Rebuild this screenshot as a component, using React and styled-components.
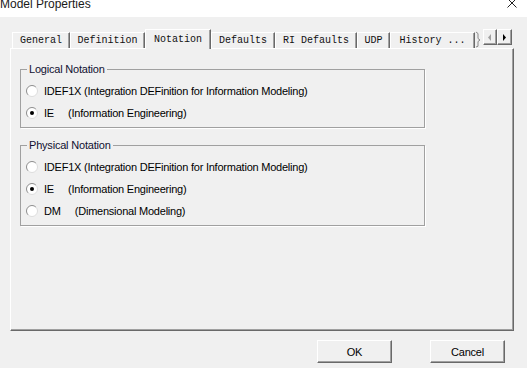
import React from 'react'
import styled, { createGlobalStyle } from 'styled-components'

const GlobalStyle = createGlobalStyle`
  html, body {
    margin: 0;
    padding: 0;
    background: #f0f0f0;
  }
  body {
    font-family: "Liberation Sans", Arial, sans-serif;
    font-size: 11px;
    color: #000;
  }
`

const Window = styled.div`
  width: 527px;
  height: 368px;
  overflow: hidden;
  background: #f0f0f0;
  display: flex;
  flex-direction: column;
`

const TitleBar = styled.div`
  height: 17px;
  flex-shrink: 0;
  background: #fff;
  display: flex;
  justify-content: space-between;
  align-items: flex-start;
  overflow: hidden;
`

const Title = styled.span`
  font-size: 12px;
  line-height: 12px;
  margin-top: -2px;
  color: #1a1a1a;
  white-space: nowrap;
`

const Close = styled.svg`
  margin: -2px 10px 0 0;
`

const Body = styled.div`
  padding: 12px 13px 0 10px;
`

const TabRow = styled.div`
  display: flex;
  align-items: flex-end;
  height: 19px;
  padding-left: 2px;
  padding-right: 2px;
`

const Tab = styled.div`
  box-sizing: border-box;
  width: ${p => p.$w}px;
  height: ${p => (p.$active ? 20 : 16)}px;
  margin-bottom: ${p => (p.$active ? -1 : 0)}px;
  position: relative;
  z-index: ${p => (p.$active ? 1 : 0)};
  background: #f0f0f0;
  border-top: 1px solid #fff;
  border-left: 1px solid #fff;
  border-right: 1px solid #696969;
  box-shadow: inset -1px 0 #a0a0a0;
  display: flex;
  align-items: ${p => (p.$active ? 'flex-start' : 'center')};
  justify-content: center;
  padding-top: ${p => (p.$active ? 4 : 1)}px;
  font-family: "Liberation Mono", "DejaVu Sans Mono", monospace;
  font-size: 10px;
  line-height: 12px;
  color: #111;
  white-space: pre;
`

const Brace = styled.svg`
  align-self: flex-end;
`

const Arrows = styled.div`
  margin-left: auto;
  align-self: flex-start;
  display: flex;
`

const ArrowButton = styled.div`
  box-sizing: border-box;
  width: ${p => p.$w}px;
  height: 16px;
  border-top: 1px solid #fff;
  border-left: 1px solid #fff;
  border-right: 1px solid #696969;
  border-bottom: 1px solid #696969;
  box-shadow: inset -1px -1px #a0a0a0;
  display: flex;
  align-items: center;
  justify-content: center;
`

const Panel = styled.div`
  box-sizing: border-box;
  height: 283px;
  border-top: 1px solid #fff;
  border-left: 1px solid #fff;
  border-right: 1px solid #696969;
  border-bottom: 1px solid #696969;
  box-shadow: inset -1px -1px #a0a0a0;
  padding: 14px 0 0 9px;
`

const Group = styled.fieldset`
  box-sizing: border-box;
  width: 405px;
  margin: ${p => (p.$first ? 0 : 11)}px 0 0 0;
  padding: 5px 0 3px 5px;
  border: 1px solid #a0a0a0;
  box-shadow: 1px 1px 0 #fff;
  min-width: 0;
`

const Legend = styled.legend`
  margin-left: 1px;
  padding: 0 2px;
  line-height: 12px;
  letter-spacing: -0.2px;
  color: #101030;
`

const Row = styled.label`
  display: flex;
  align-items: center;
  height: 22px;
  gap: 6px;
  white-space: pre;
  letter-spacing: -0.23px;
`

const ButtonBar = styled.div`
  display: flex;
  justify-content: flex-end;
  gap: 38px;
  padding: 9px 22px 0 0;
`

const Button = styled.div`
  box-sizing: border-box;
  width: 75px;
  height: 23px;
  background: #f0f0f0;
  border-top: 1px solid #fff;
  border-left: 1px solid #fff;
  border-right: 1px solid #696969;
  border-bottom: 1px solid #696969;
  box-shadow: inset -1px -1px #a0a0a0;
  display: flex;
  align-items: center;
  justify-content: center;
  letter-spacing: -0.2px;
`

function Radio({ checked }) {
  return (
    <svg width="12" height="12" viewBox="0 0 12 12">
      <circle cx="6" cy="6" r="5.5" fill="#fff" />
      <path d="M2.11 9.89 A5.5 5.5 0 0 1 9.89 2.11" fill="none" stroke="#8c8c8c" />
      <path d="M9.89 2.11 A5.5 5.5 0 0 1 2.11 9.89" fill="none" stroke="#dcdcdc" />
      {checked && <circle cx="6" cy="6" r="2" fill="#000" />}
    </svg>
  )
}

const tabs = [
  ['General', 58],
  ['Definition', 75],
  ['Notation', 66, true],
  ['Defaults', 64],
  ['RI Defaults', 82],
  ['UDP', 33],
  ['History ...', 85],
]

const logical = [
  ['IDEF1X (Integration DEFinition for Information Modeling)', false],
  ['IE     (Information Engineering)', true],
]

const physical = [
  ['IDEF1X (Integration DEFinition for Information Modeling)', false],
  ['IE     (Information Engineering)', true],
  ['DM     (Dimensional Modeling)', false],
]

export default function App() {
  return (
    <>
      <GlobalStyle />
      <Window>
        <TitleBar>
          <Title>Model Properties</Title>
          <Close width="10" height="10" viewBox="0 0 10 10">
            <path d="M0.5 0.5 L9.5 9.5 M9.5 0.5 L0.5 9.5" stroke="#222" strokeWidth="1" />
          </Close>
        </TitleBar>
        <Body>
          <TabRow>
            {tabs.map(([label, w, active]) => (
              <Tab key={label} $w={w} $active={active}>
                {label}
              </Tab>
            ))}
            <Brace width="7" height="17" viewBox="0 0 7 17">
              <path
                d="M1 1 Q4 2 3 5 Q2 8 5 9 Q2 10 3 13 Q4 16 1 16"
                fill="none"
                stroke="#8a8a8a"
              />
            </Brace>
            <Arrows>
              <ArrowButton $w={14}>
                <svg width="4" height="7" viewBox="0 0 4 7">
                  <path d="M3 0 L0 3.5 L3 7 Z" fill="#a0a0a0" />
                </svg>
              </ArrowButton>
              <ArrowButton $w={15}>
                <svg width="4" height="7" viewBox="0 0 4 7">
                  <path d="M0 0 L3 3.5 L0 7 Z" fill="#000" />
                </svg>
              </ArrowButton>
            </Arrows>
          </TabRow>
          <Panel>
            <Group $first>
              <Legend>Logical Notation</Legend>
              {logical.map(([text, checked]) => (
                <Row key={text}>
                  <Radio checked={checked} />
                  {text}
                </Row>
              ))}
            </Group>
            <Group>
              <Legend>Physical Notation</Legend>
              {physical.map(([text, checked]) => (
                <Row key={text}>
                  <Radio checked={checked} />
                  {text}
                </Row>
              ))}
            </Group>
          </Panel>
        </Body>
        <ButtonBar>
          <Button>OK</Button>
          <Button>Cancel</Button>
        </ButtonBar>
      </Window>
    </>
  )
}
